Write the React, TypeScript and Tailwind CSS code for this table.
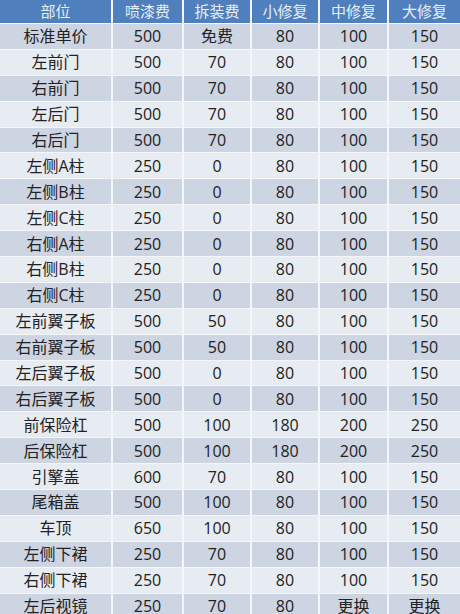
const headers = ['部位', '喷漆费', '拆装费', '小修复', '中修复', '大修复']

// part, paint, dismount, small, medium, large
const rows: string[][] = [
  ['标准单价', '500', '免费', '80', '100', '150'],
  ['左前门', '500', '70', '80', '100', '150'],
  ['右前门', '500', '70', '80', '100', '150'],
  ['左后门', '500', '70', '80', '100', '150'],
  ['右后门', '500', '70', '80', '100', '150'],
  ['左侧A柱', '250', '0', '80', '100', '150'],
  ['左侧B柱', '250', '0', '80', '100', '150'],
  ['左侧C柱', '250', '0', '80', '100', '150'],
  ['右侧A柱', '250', '0', '80', '100', '150'],
  ['右侧B柱', '250', '0', '80', '100', '150'],
  ['右侧C柱', '250', '0', '80', '100', '150'],
  ['左前翼子板', '500', '50', '80', '100', '150'],
  ['右前翼子板', '500', '50', '80', '100', '150'],
  ['左后翼子板', '500', '0', '80', '100', '150'],
  ['右后翼子板', '500', '0', '80', '100', '150'],
  ['前保险杠', '500', '100', '180', '200', '250'],
  ['后保险杠', '500', '100', '180', '200', '250'],
  ['引擎盖', '600', '70', '80', '100', '150'],
  ['尾箱盖', '500', '100', '80', '100', '150'],
  ['车顶', '650', '100', '80', '100', '150'],
  ['左侧下裙', '250', '70', '80', '100', '150'],
  ['右侧下裙', '250', '70', '80', '100', '150'],
  ['左后视镜', '250', '70', '80', '更换', '更换'],
]

const cols = 'grid grid-cols-[111px_69px_66px_66px_67px_71px] gap-x-[2px]'

export default function App() {
  return (
    <div
      className="w-[460px] h-[614px] overflow-hidden bg-[#f4f6fa] flex flex-col gap-y-px"
      style={{ fontFamily: '"Open Sans", "Noto Sans CJK SC", sans-serif' }}
    >
      {/* header */}
      <div className={`${cols} h-[23px] shrink-0`}>
        {headers.map((h) => (
          <div
            key={h}
            className="bg-[#4f7fbd] text-[#e9eff8] text-[15px] flex items-center justify-center leading-none"
          >
            {h}
          </div>
        ))}
      </div>

      {rows.map((r, i) => (
        <div key={r[0]} className={`${cols} h-[24.9px] shrink-0`}>
          {r.map((c, j) => (
            <div
              key={j}
              className={`${i % 2 === 0 ? 'bg-[#cdd4e2]' : 'bg-[#e7ebf2]'} text-[#222222] text-[16px] flex items-center justify-center leading-none`}
            >
              {c}
            </div>
          ))}
        </div>
      ))}
    </div>
  )
}
